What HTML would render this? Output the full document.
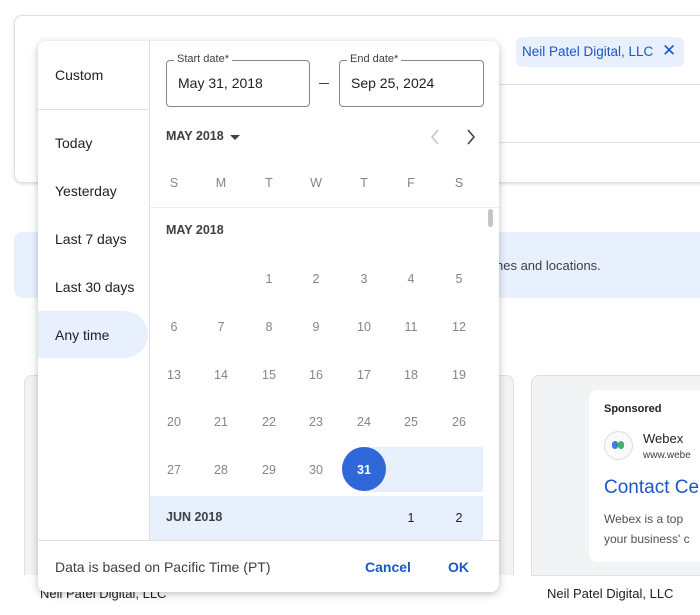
<!DOCTYPE html>
<html><head><meta charset="utf-8"><style>
*{margin:0;padding:0;box-sizing:border-box}
body{width:700px;height:598px;overflow:hidden;background:#fff;font-family:"Liberation Sans",sans-serif;position:relative;color:#202124}
.a{position:absolute}
.t{position:absolute;white-space:nowrap}
.d{position:absolute;width:40px;text-align:center;font-size:12.5px;color:#80868b;transform:translateX(-20px)}
.m{position:absolute;white-space:nowrap;font-size:14px;left:17px}
</style></head><body>
<div class="a" style="left:14px;top:15px;width:700px;height:168px;border:1px solid #e0e0e0;border-radius:8px;box-shadow:0 1px 3px rgba(0,0,0,.15)"></div>
<div class="a" style="left:516px;top:37px;width:168px;height:30px;background:#e8f0fe;border-radius:6px"></div>
<div class="t" style="left:522px;top:44px;font-size:13.5px;color:#1a57c7">Neil Patel Digital, LLC</div>
<div class="t" style="left:662px;top:41px;font-size:17px;color:#1a57c7">✕</div>
<div class="a" style="left:499px;top:84px;width:201px;height:1px;background:#e0e0e0"></div>
<div class="a" style="left:499px;top:142px;width:201px;height:1px;background:#e0e0e0"></div>
<div class="a" style="left:14px;top:232px;width:700px;height:66px;background:#e8f0fe;border-radius:8px"></div>
<div class="t" style="left:496px;top:258px;font-size:13px;color:#3c4043">nes and locations.</div>
<div class="a" style="left:24px;top:375px;width:490px;height:240px;background:#f1f3f4;border:1px solid #e0e0e0;border-radius:8px"></div>
<div class="a" style="left:24px;top:575px;width:490px;height:40px;background:#fff"></div>
<div class="a" style="left:531px;top:375px;width:200px;height:240px;background:#f1f3f4;border:1px solid #e0e0e0;border-radius:8px"></div>
<div class="a" style="left:531px;top:575px;width:200px;height:40px;background:#fff;border-top:1px solid #e0e0e0"></div>
<div class="a" style="left:589px;top:390px;width:140px;height:172px;background:#fff;border-radius:8px"></div>
<div class="t" style="left:604px;top:403px;font-size:11px;font-weight:bold">Sponsored</div>
<div class="a" style="left:604px;top:431px;width:29px;height:29px;border-radius:50%;border:1px solid #ddd;background:#fafafa"></div>
<div class="a" style="left:612px;top:441px;width:6px;height:8px;border-radius:3px;background:#3a7de0"></div>
<div class="a" style="left:618px;top:441px;width:6px;height:8px;border-radius:3px;background:#3bb36b"></div>
<div class="t" style="left:643px;top:431px;font-size:13px">Webex</div>
<div class="t" style="left:643px;top:450px;font-size:10px;color:#3c4043">www.webe</div>
<div class="t" style="left:604px;top:477px;font-size:19px;color:#1a57c7">Contact Ce</div>
<div class="t" style="left:604px;top:512px;font-size:12px;color:#4d5156">Webex is a top</div>
<div class="t" style="left:604px;top:532px;font-size:12px;color:#4d5156">your business' c</div>
<div class="t" style="left:547px;top:586px;font-size:13px">Neil Patel Digital, LLC</div>
<div class="t" style="left:40px;top:586px;font-size:13px">Neil Patel Digital, LLC</div>

<div class="a" style="left:38px;top:41px;width:461px;height:551px;background:#fff;border-radius:8px;box-shadow:0 2px 8px rgba(0,0,0,.25);overflow:hidden">
 <div class="a" style="left:111px;top:0;width:1px;height:499px;background:#e0e0e0"></div>
 <div class="a" style="left:0;top:68px;width:111px;height:1px;background:#e0e0e0"></div>
 <div class="m" style="top:26px">Custom</div>
 <div class="a" style="left:0;top:270px;width:110px;height:47px;background:#e8f0fe;border-radius:0 24px 24px 0"></div>
 <div class="m" style="top:94px">Today</div>
 <div class="m" style="top:142px">Yesterday</div>
 <div class="m" style="top:190px">Last 7 days</div>
 <div class="m" style="top:238px">Last 30 days</div>
 <div class="m" style="top:286px">Any time</div>
 <div class="a" style="left:128px;top:19px;width:144px;height:47px;border:1px solid #80868b;border-radius:4px"></div>
 <div class="t" style="left:136px;top:12px;font-size:11px;color:#3c4043;background:#fff;padding:0 3px">Start date*</div>
 <div class="t" style="left:140px;top:34px;font-size:14px">May 31, 2018</div>
 <div class="a" style="left:281px;top:42px;width:10px;height:1px;background:#3c4043"></div>
 <div class="a" style="left:301px;top:19px;width:145px;height:47px;border:1px solid #80868b;border-radius:4px"></div>
 <div class="t" style="left:309px;top:12px;font-size:11px;color:#3c4043;background:#fff;padding:0 3px">End date*</div>
 <div class="t" style="left:313px;top:34px;font-size:14px">Sep 25, 2024</div>
 <div class="t" style="left:128px;top:88px;font-size:12.5px;font-weight:bold;color:#3c4043">MAY 2018</div>
 <div class="a" style="left:192px;top:94px;border-left:5px solid transparent;border-right:5px solid transparent;border-top:5px solid #3c4043"></div>
 <svg class="a" style="left:391px;top:87px" width="12" height="18"><path d="M9 2L3 9L9 16" fill="none" stroke="#c4c7c5" stroke-width="1.5"/></svg>
 <svg class="a" style="left:427px;top:87px" width="12" height="18"><path d="M3 2L9 9L3 16" fill="none" stroke="#3c4043" stroke-width="1.5"/></svg>
 <div class="d" style="left:136px;top:135px">S</div><div class="d" style="left:183px;top:135px">M</div><div class="d" style="left:231px;top:135px">T</div><div class="d" style="left:278px;top:135px">W</div><div class="d" style="left:326px;top:135px">T</div><div class="d" style="left:373px;top:135px">F</div><div class="d" style="left:421px;top:135px">S</div>
 <div class="a" style="left:112px;top:166px;width:349px;height:1px;background:#eee"></div>
 <div class="a" style="left:450px;top:168px;width:5px;height:18px;background:#c4c7c5;border-radius:3px"></div>
 <div class="t" style="left:128px;top:182px;font-size:12.5px;font-weight:bold;color:#3c4043">MAY 2018</div>
 <div class="d" style="left:231px;top:231px">1</div><div class="d" style="left:278px;top:231px">2</div><div class="d" style="left:326px;top:231px">3</div><div class="d" style="left:373px;top:231px">4</div><div class="d" style="left:421px;top:231px">5</div>
 <div class="d" style="left:136px;top:279px">6</div><div class="d" style="left:183px;top:279px">7</div><div class="d" style="left:231px;top:279px">8</div><div class="d" style="left:278px;top:279px">9</div><div class="d" style="left:326px;top:279px">10</div><div class="d" style="left:373px;top:279px">11</div><div class="d" style="left:421px;top:279px">12</div>
 <div class="d" style="left:136px;top:327px">13</div><div class="d" style="left:183px;top:327px">14</div><div class="d" style="left:231px;top:327px">15</div><div class="d" style="left:278px;top:327px">16</div><div class="d" style="left:326px;top:327px">17</div><div class="d" style="left:373px;top:327px">18</div><div class="d" style="left:421px;top:327px">19</div>
 <div class="d" style="left:136px;top:374px">20</div><div class="d" style="left:183px;top:374px">21</div><div class="d" style="left:231px;top:374px">22</div><div class="d" style="left:278px;top:374px">23</div><div class="d" style="left:326px;top:374px">24</div><div class="d" style="left:373px;top:374px">25</div><div class="d" style="left:421px;top:374px">26</div>
 <div class="a" style="left:326px;top:406px;width:119px;height:45px;background:#e8f0fe"></div>
 <div class="a" style="left:304px;top:406px;width:44px;height:44px;border-radius:50%;background:#2f66d8"></div>
 <div class="d" style="left:136px;top:422px">27</div><div class="d" style="left:183px;top:422px">28</div><div class="d" style="left:231px;top:422px">29</div><div class="d" style="left:278px;top:422px">30</div><div class="d" style="left:326px;top:422px;color:#fff;font-weight:bold">31</div>
 <div class="a" style="left:112px;top:455px;width:333px;height:44px;background:#e8f0fe"></div>
 <div class="t" style="left:128px;top:469px;font-size:12.5px;font-weight:bold;color:#3c4043">JUN 2018</div>
 <div class="d" style="left:373px;top:470px;color:#202124">1</div><div class="d" style="left:421px;top:470px;color:#202124">2</div>
 <div class="a" style="left:0;top:499px;width:461px;height:1px;background:#e0e0e0"></div>
 <div class="t" style="left:17px;top:518px;font-size:14px;color:#3c4043">Data is based on Pacific Time (PT)</div>
 <div class="t" style="left:327px;top:518px;font-size:14px;color:#1a57c7;font-weight:bold">Cancel</div>
 <div class="t" style="left:410px;top:518px;font-size:14px;color:#1a57c7;font-weight:bold">OK</div>
</div>
</body></html>
